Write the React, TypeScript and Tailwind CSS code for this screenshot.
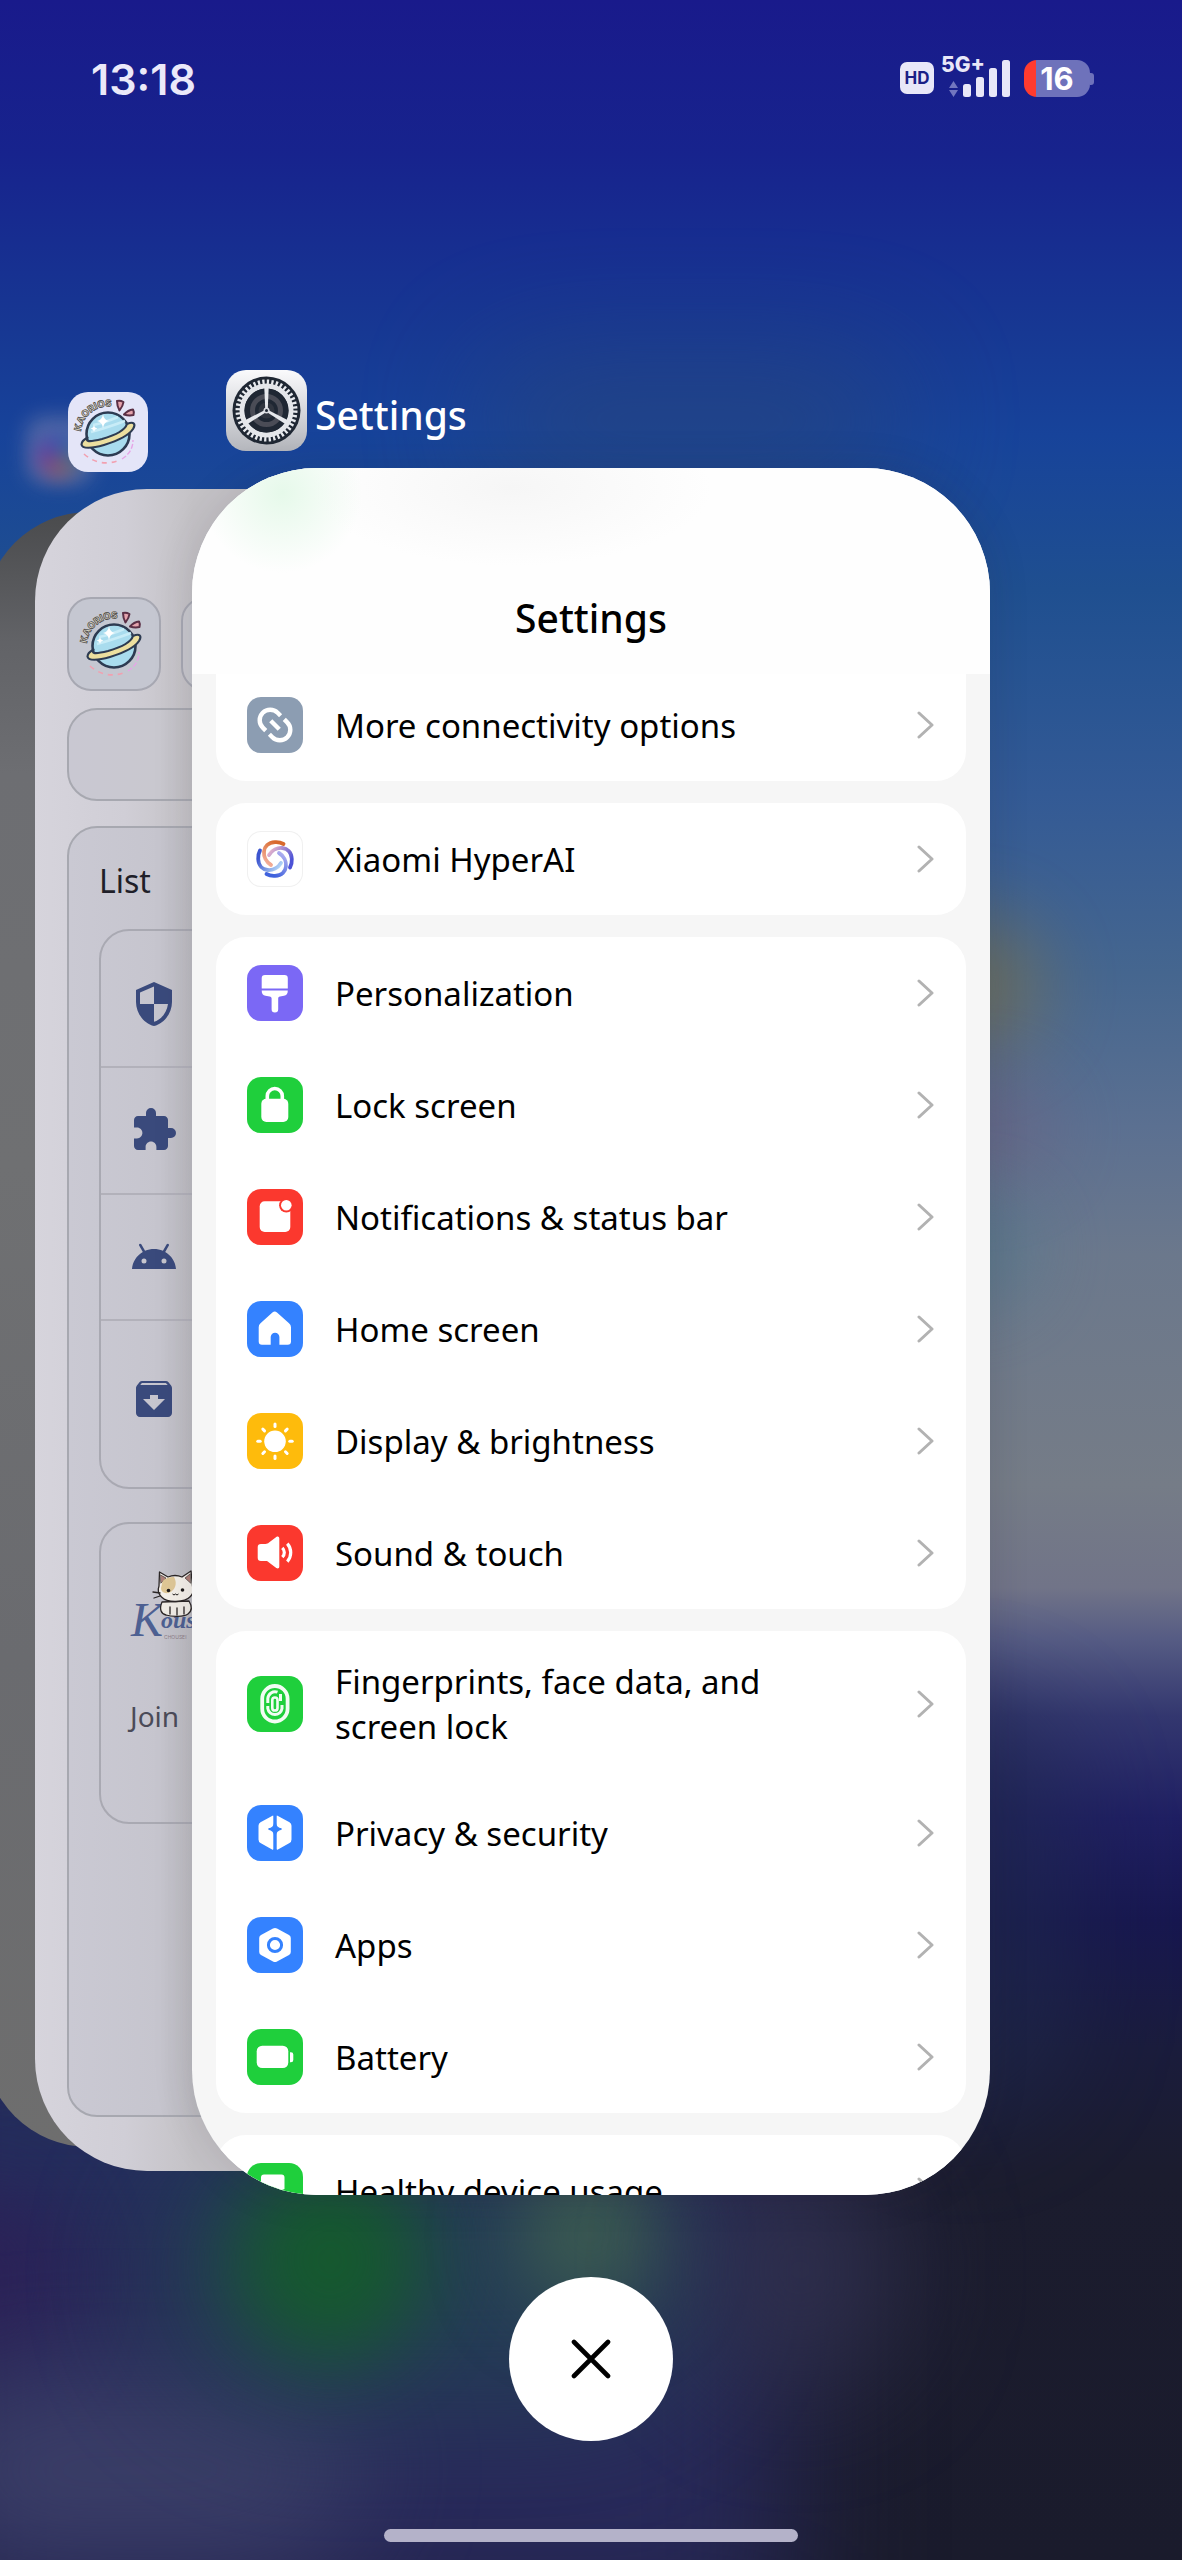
import React from 'react';
import { MdSecurity, MdExtension, MdArchive } from 'react-icons/md';

interface SettingItem {
  label: string;
  tile: string;
  icon: React.ReactNode;
}

const LinkIcon = () => (
  <g transform="translate(28 28) rotate(45)" fill="none" stroke="#fff" strokeWidth="4.4">
    <path d="M-2.6 -10.5H-6.8A10.5 10.5 0 0 0 -6.8 10.5H-2.6" />
    <path d="M2.6 -10.5H6.8A10.5 10.5 0 0 1 6.8 10.5H2.6" />
    <path d="M-6 0H6" />
  </g>
);

// Four spiral arms, each a quarter turn from the last
const HyperAiIcon = () => {
  const arm = 'M-4 6C-14 0 -14 -16 0 -16.8C3 -17 6 -16.4 8.5 -15';
  return (
    <>
      <defs>
        <linearGradient id="armOrange" x1="0" y1="1" x2="0.6" y2="0">
          <stop offset="0" stopColor="#f7b7a8" />
          <stop offset="1" stopColor="#d8692c" />
        </linearGradient>
        <linearGradient id="armPurple" x1="0" y1="1" x2="0.6" y2="0">
          <stop offset="0" stopColor="#f3bccb" />
          <stop offset="1" stopColor="#4c52d6" />
        </linearGradient>
        <linearGradient id="armBlue" x1="0" y1="1" x2="0.6" y2="0">
          <stop offset="0" stopColor="#b9b6f2" />
          <stop offset="1" stopColor="#3f62dd" />
        </linearGradient>
        <linearGradient id="armSky" x1="0" y1="1" x2="0.6" y2="0">
          <stop offset="0" stopColor="#bfe2fb" />
          <stop offset="1" stopColor="#3c55cf" />
        </linearGradient>
      </defs>
      <g transform="translate(28 28)" fill="none" strokeWidth="3.8" strokeLinecap="round">
        <path d={arm} stroke="url(#armOrange)" />
        <path d={arm} stroke="url(#armPurple)" transform="rotate(90)" />
        <path d={arm} stroke="url(#armBlue)" transform="rotate(180)" />
        <path d={arm} stroke="url(#armSky)" transform="rotate(270)" />
      </g>
    </>
  );
};

const BrushIcon = () => (
  <g fill="#fff">
    <path d="M18 10H37.500a3.300 3.300 0 0 1 3.300 3.300V23.400H14.700V13.300A3.300 3.300 0 0 1 18 10Z" />
    <path d="M14.700 25.600H40.800C40.800 29 39.500 30.400 37 30.800L33 31.400C31.600 31.600 31.200 32.400 31.200 33.500V44.300A3.300 3.300 0 0 1 24.600 44.300V33.500C24.600 32.400 24 31.600 22.600 31.400L18.500 30.800C16 30.400 14.700 29 14.700 25.600Z" />
  </g>
);

const LockIcon = () => (
  <>
    <rect x="14.300" y="21.700" width="27" height="23.300" rx="5" fill="#fff" />
    <path d="M20.300 24V19A7.500 7.500 0 0 1 35.300 19V24" fill="none" stroke="#fff" strokeWidth="3.600" />
  </>
);

const NotificationIcon = () => (
  <>
    <rect x="12.700" y="12.300" width="30.600" height="30.700" rx="5" fill="#fff" />
    <circle cx="39.300" cy="16.300" r="7.200" fill="#fb382e" />
    <circle cx="39.300" cy="16.300" r="5.300" fill="#fff" />
  </>
);

const HomeIcon = () => (
  <path
    d="M25.400 11.600a3.500 3.500 0 0 1 4.600 0L42 22.200A5 5 0 0 1 44 26.200V40.500A3.300 3.300 0 0 1 40.700 43.700H32.400V36A4.350 4.350 0 0 0 23.700 36V43.700H15A3.300 3.300 0 0 1 11.700 40.500V26.200A5 5 0 0 1 13.500 22.200Z"
    fill="#fff"
  />
);

const SunIcon = () => (
  <g transform="translate(28 28.300)">
    <circle r="10.800" fill="#fff" />
    {[0, 45, 90, 135, 180, 225, 270, 315].map((angle) => (
      <path key={angle} d="M0 -14.800V-17.200" transform={`rotate(${angle})`} stroke="#fff" strokeWidth="3" strokeLinecap="round" />
    ))}
  </g>
);

const SoundIcon = () => (
  <>
    <path d="M14 19H18.500C20 19 20.800 18.600 22 17.600L29.300 12C30.800 11 32.300 11.600 32.300 13.500V41.500C32.300 43.400 30.800 44 29.300 43L22 37.400C20.800 36.400 20 36 18.500 36H14A3.300 3.300 0 0 1 10.700 32.700V22.300A3.300 3.300 0 0 1 14 19Z" fill="#fff" />
    <g fill="none" stroke="#fff" strokeWidth="3.200">
      <path d="M35.300 22.800A6.500 6.500 0 0 1 35.300 32.200" />
      <path d="M40.300 18.600A13.500 13.500 0 0 1 40.300 36.600" />
    </g>
  </>
);

const FingerprintIcon = () => (
  <g fill="none" stroke="#fff" strokeOpacity="0.94">
    <rect x="15.200" y="10" width="25.400" height="35.500" rx="12.700" strokeWidth="3.800" />
    <path d="M20.800 27V22.500A7.200 7.200 0 0 1 30.500 16.200" strokeWidth="3" />
    <path d="M33.500 18V25M35 29V32.500A7.200 7.200 0 0 1 20.800 32.500V30" strokeWidth="3" />
    <rect x="25.300" y="21.500" width="5.200" height="13" rx="2.600" strokeWidth="2.600" />
  </g>
);

const PrivacyIcon = () => (
  <>
    <path d="M25.500 10.800L13.500 17.200A4 4 0 0 0 11.500 20.700V34.500A4 4 0 0 0 13.500 38L25.500 44.800Q26.300 45 26.300 44V10.900Q26.300 10.300 25.500 10.800Z" fill="#fff" />
    <path d="M30.500 10.800L42.500 17.200A4 4 0 0 1 44.500 20.700V34.500A4 4 0 0 1 42.500 38L30.500 44.800Q29.700 45 29.700 44V10.900Q29.700 10.300 30.500 10.800Z" fill="#fff" />
    <path d="M28 17Q28.800 23.200 34.500 24Q28.800 24.800 28 31Q27.200 24.800 21.500 24Q27.200 23.200 28 17Z" fill="#3482ff" stroke="#3482ff" strokeWidth="1.500" />
  </>
);

const AppsIcon = () => (
  <>
    <path d="M26 11.500a4 4 0 0 1 4 0L42 18A3.500 3.500 0 0 1 43.800 21V35A3.500 3.500 0 0 1 42 38L30 44.500a4 4 0 0 1 -4 0L14 38A3.500 3.500 0 0 1 12.200 35V21A3.500 3.500 0 0 1 14 18Z" fill="#fff" />
    <circle cx="28" cy="28" r="6.600" fill="none" stroke="#3482ff" strokeWidth="3" />
  </>
);

const BatteryIcon = () => (
  <g fill="#fff">
    <rect x="9.700" y="16.700" width="31.600" height="22.300" rx="5.500" />
    <path d="M43 23.200H44A2.300 2.300 0 0 1 46.300 25.500V31A2.300 2.300 0 0 1 44 33.300H43Z" />
  </g>
);

const HealthIcon = () => (
  <path d="M17 11.500H34.500A3 3 0 0 1 37.500 14.500V26A9 9 0 0 0 30 36H17A3 3 0 0 1 14 33V14.500A3 3 0 0 1 17 11.500Z" fill="#fff" />
);

const groups: SettingItem[][] = [
  [{ label: 'Xiaomi HyperAI', tile: 'bg-white ring-1 ring-inset ring-[#f0f0f0]', icon: <HyperAiIcon /> }],
  [
    { label: 'Personalization', tile: 'bg-[#7b68f5]', icon: <BrushIcon /> },
    { label: 'Lock screen', tile: 'bg-[#1fcf3c]', icon: <LockIcon /> },
    { label: 'Notifications & status bar', tile: 'bg-[#fb382e]', icon: <NotificationIcon /> },
    { label: 'Home screen', tile: 'bg-[#3482ff]', icon: <HomeIcon /> },
    { label: 'Display & brightness', tile: 'bg-[#febb0c]', icon: <SunIcon /> },
    { label: 'Sound & touch', tile: 'bg-[#fb382e]', icon: <SoundIcon /> }
  ],
  [
    { label: 'Fingerprints, face data, and screen lock', tile: 'bg-[#1fcf3c]', icon: <FingerprintIcon /> },
    { label: 'Privacy & security', tile: 'bg-[#3482ff]', icon: <PrivacyIcon /> },
    { label: 'Apps', tile: 'bg-[#3482ff]', icon: <AppsIcon /> },
    { label: 'Battery', tile: 'bg-[#1fcf3c]', icon: <BatteryIcon /> }
  ],
  [{ label: 'Healthy device usage', tile: 'bg-[#1fcf3c]', icon: <HealthIcon /> }]
];

const SettingRow: React.FC<{ item: SettingItem }> = ({ item }) => (
  <a href="#" className="flex items-center gap-8 py-7 pr-8 pl-[31px] text-black">
    <span className={`size-14 shrink-0 overflow-hidden rounded-[14px] ${item.tile}`}>
      <svg viewBox="0 0 56 56" className="size-14">{item.icon}</svg>
    </span>
    <span className="max-w-[480px] text-[33px] leading-[45px]">{item.label}</span>
    <svg viewBox="0 0 18 28" className="ml-auto h-7 w-[18px] shrink-0" fill="none" stroke="#b2b2b2" strokeWidth="3" strokeLinecap="round" strokeLinejoin="round">
      <path d="M3 2L16 14L3 26" />
    </svg>
  </a>
);

const KaoriosLogo: React.FC<{ id: string }> = ({ id }) => (
  <svg viewBox="0 0 80 80" className="size-20">
    <defs>
      <path id={id} d="M13 39.500A27.500 27.500 0 0 1 52 17" />
    </defs>
    <text fontFamily="Inter, sans-serif" fontSize="9.5" fontWeight="800" fill="#d8d3c4" stroke="#4a4743" strokeWidth="0.700">
      <textPath href={`#${id}`}>KAORIOS</textPath>
    </text>
    <circle cx="40" cy="42" r="21.500" fill="#a9dcee" stroke="#2d3b52" strokeWidth="2.600" />
    <path d="M23 40Q38 36 57 29M25 33Q36 31 50 25" stroke="#c8ecf7" strokeWidth="2.500" fill="none" />
    <path d="M35 22Q35.800 28 41 29Q35.800 30 35 36Q34.200 30 29 29Q34.200 28 35 22Z" fill="#fff" />
    <path d="M26 33Q26.500 36 29.500 36.500Q26.500 37 26 40Q25.500 37 22.500 36.500Q25.500 36 26 33Z" fill="#fff" />
    <path d="M59 32C66 29 68 32 65 37C61 43 49 49 36 53C24 56.500 14 57 13.500 52.500C13.500 49.500 16 47.500 19.500 45.500C17.500 49.500 20 50.500 34 47C48 43 57 38 59 32Z" fill="#ecdf9f" stroke="#2d3b52" strokeWidth="2.200" strokeLinejoin="round" />
    <path d="M49 9Q52 8 55.500 10Q55 14 51.500 18.500Q49 14 49 9Z" fill="#e5a3ad" stroke="#5b2f45" strokeWidth="2" strokeLinejoin="round" />
    <path d="M65 17.500Q66.500 20 65.500 23Q61 24 56 22.500Q60 18 65 17.500Z" fill="#e5a3ad" stroke="#5b2f45" strokeWidth="2" strokeLinejoin="round" />
    <path d="M16 62Q32 76 52 68" fill="none" stroke="#f2a0b0" strokeWidth="1.600" strokeDasharray="5 5" />
    <path d="M54 67Q65 60 65 48" fill="none" stroke="#e6a5e6" strokeWidth="1.400" strokeDasharray="5 2" />
  </svg>
);

const GearLogo = () => (
  <svg viewBox="0 0 81 81" className="size-[81px]">
    <defs>
      <linearGradient id="gearBg" x1="0" y1="0" x2="0" y2="1">
        <stop offset="0" stopColor="#fafafc" />
        <stop offset="1" stopColor="#b4b6bc" />
      </linearGradient>
    </defs>
    <rect width="81" height="81" rx="20" fill="url(#gearBg)" />
    <g transform="translate(40.500 40.500)" fill="none">
      <circle r="34" fill="#1f2733" />
      <circle r="28.500" stroke="#e9ebef" strokeWidth="5" strokeDasharray="2.240 2.240" />
      <circle r="24.500" stroke="#e4e6ea" strokeWidth="5" />
      <circle r="22" fill="#1f2733" />
      <circle r="14" stroke="#4a4c56" strokeWidth="5" />
      <circle r="8" fill="#30353f" />
      {[0, 120, 240].map((angle) => (
        <path key={angle} d="M-1.200 0L-2.200 -23H2.200L1.200 0Z" transform={`rotate(${angle})`} fill="#e6e8ec" />
      ))}
      <circle r="3" fill="#d9dbe0" />
      <circle r="1.500" fill="#1f2733" />
    </g>
  </svg>
);

const AndroidHead = () => (
  <svg viewBox="0 0 24 24" className="size-12" fill="currentColor">
    <path d="M17.600 9.480l1.840-3.180c.16-.31.04-.69-.26-.85-.29-.15-.65-.06-.83.22l-1.880 3.240c-2.860-1.210-6.080-1.210-8.940 0L5.650 5.670c-.19-.29-.58-.38-.87-.2-.28.18-.37.54-.22.83L6.400 9.480C3.300 11.250 1.280 14.440 1 18h22c-.28-3.560-2.300-6.750-5.400-8.520zM7 15.250a1.250 1.250 0 1 1 0-2.500 1.250 1.250 0 0 1 0 2.500zm10 0a1.250 1.250 0 1 1 0-2.500 1.250 1.250 0 0 1 0 2.500z" />
  </svg>
);

const CatLogo = () => (
  <svg viewBox="0 0 90 72" className="h-[72px] w-[90px]">
    <text y="68" fontFamily="Liberation Serif, serif" fontStyle="italic" fontWeight="bold" fill="#4d6092">
      <tspan x="1" fontSize="48" fontWeight="normal">K</tspan>
      <tspan x="31" y="60" fontSize="24">ousei</tspan>
    </text>
    <g stroke="#2b2626" strokeWidth="1.300" strokeLinejoin="round" strokeLinecap="round">
      <path d="M32 34C29 41 31 46 36 47C42 49 54 49 58 46C62 43 62 38 59 33Z" fill="#f1ede6" />
      <path d="M40 39V46M47 40V47M54 39V46" fill="none" />
      <path d="M29 18L29.500 4L38 9Q45 6 52 9L61 3L62.500 18C65 26 60 33 46 33.500C33 34 26 26 29 18Z" fill="#f5f1ea" />
      <path d="M30.500 7L36 10L31 15Z" fill="#b08079" strokeWidth="0.600" />
      <path d="M60 6L55 10L60.500 15Z" fill="#b08079" strokeWidth="0.600" />
      <path d="M23 24L30 25M24 30L30 28" fill="none" />
    </g>
    <path d="M32 16C32 11 38 9 44 9C47 14 46 20 42 23C37 27 31 25 31 20Z" fill="#e0c896" />
    <g fill="#1d1a1a">
      <circle cx="38.500" cy="22.500" r="1.800" />
      <circle cx="52.500" cy="22" r="1.800" />
    </g>
    <path d="M42.500 26Q44 28 45.500 26Q47 28 48.500 26" fill="none" stroke="#1d1a1a" strokeWidth="1" />
    <text x="34" y="71" fontFamily="Inter, sans-serif" fontSize="5" fill="#8d7f88">CHOUSEI</text>
  </svg>
);

const Wallpaper = () => (
  <div className="absolute inset-0 overflow-hidden bg-[linear-gradient(180deg,#191a8b_0%,#17238d_6%,#173893_13%,#17439a_17%,#1f4f90_23%,#335a95_31%,#45668f_38%,#5b7091_44%,#6b788c_49%,#757c87_58%,#717488_62%,#565c84_64%,#33376f_67%,#1f1f62_71%,#17174f_75%,#1a1c3c_80%,#1b1c2e_85%,#1a1b2c_100%)]">
    <div className="absolute top-[360px] left-[480px] h-[120px] w-[420px] rounded-full bg-[#2b4576] opacity-60 blur-[60px]" />
    <div className="absolute top-[920px] left-[900px] h-[130px] w-[140px] rounded-full bg-[#7c7148] opacity-70 blur-[40px]" />
    <div className="absolute top-[1080px] left-[920px] h-[100px] w-[130px] rounded-full bg-[#6e5f7d] opacity-60 blur-[40px]" />
    <div className="absolute top-[1200px] left-[910px] h-[100px] w-[120px] rounded-full bg-[#48768a] opacity-60 blur-[40px]" />
    <div className="absolute top-[1700px] left-[850px] h-[420px] w-[220px] rounded-full bg-[#202a4c] opacity-60 blur-[50px]" />
    <div className="absolute -bottom-20 -left-24 h-[620px] w-[880px] bg-[#28295a] blur-[70px]" />
    <div className="absolute top-[2060px] -left-20 h-[160px] w-[420px] bg-[#242d5c] blur-[40px]" />
    <div className="absolute top-[2180px] -left-24 h-[200px] w-[160px] rounded-full bg-[#2c2158] opacity-80 blur-[40px]" />
    <div className="absolute top-[2380px] -left-20 h-[180px] w-[440px] rounded-full bg-[#40446b] opacity-80 blur-[60px]" />
    <div className="absolute top-[2140px] left-[150px] h-[270px] w-[560px] rounded-full bg-[#243f55] opacity-90 blur-[60px]" />
    <div className="absolute top-[2160px] left-[235px] h-[200px] w-[190px] rounded-full bg-[#145c2b] opacity-90 blur-[40px]" />
    <div className="absolute top-[2160px] left-[515px] h-[150px] w-[150px] rounded-full bg-[#3b5a51] blur-[40px]" />
    <div className="absolute top-[2150px] left-[700px] h-[240px] w-[200px] rounded-full bg-[#323250] opacity-80 blur-[60px]" />
  </div>
);

const StatusBar = () => (
  <header className="relative flex h-32 shrink-0 items-start justify-between pt-14 pr-[88px] pl-[91px]">
    <time className="font-[Inter] text-[43px] leading-[46px] font-semibold text-[#ebe9f9]">13:18</time>
    <div className="flex items-end font-[Inter] font-bold">
      <span className="mr-[7px] mb-[3px] flex h-8 w-[34px] items-center justify-center rounded-[7px] bg-[#e8e7f8] text-[17px] leading-none text-[#1a2086]">HD</span>
      <span className="relative h-[41px] w-[69px] text-[#e8e7f8]">
        <span className="absolute top-[-3px] left-0 text-[21px] leading-[24px] font-extrabold">5G+</span>
        <svg viewBox="0 0 69 41" className="h-[41px] w-[69px]" fill="currentColor">
          <path d="M8 32L12.500 25L17 32ZM8 34L12.500 41L17 34Z" fill="#7276bf" />
          <rect x="22" y="28" width="8" height="13" rx="2.500" />
          <rect x="35" y="21" width="8" height="20" rx="2.500" />
          <rect x="48" y="12" width="8" height="29" rx="2.500" />
          <rect x="61" y="4" width="8" height="37" rx="2.500" />
        </svg>
      </span>
      <span className="ml-[14px] flex items-center">
        <span className="flex h-[37px] w-[66px] items-center justify-center rounded-[13px] bg-[linear-gradient(90deg,#ff3b2f_12px,#6e72bb_12px)] text-[31px] leading-none text-white">16</span>
        <span className="h-3 w-1 rounded-r-[3px] bg-[#6e72bb]" />
      </span>
    </div>
  </header>
);

const KaoriosCard = () => (
  <>
    <div className="absolute top-[361px] bottom-6 left-[35px] flex w-[700px] flex-col overflow-hidden rounded-[112px] bg-[linear-gradient(90deg,#d6d4dc_0px,#d0ced6_90px,#c4c2c6_158px)] px-8 pt-[108px] pb-[54px] text-[#1f1f29]">
      <div className="flex gap-5">
        <div className="flex size-[94px] shrink-0 items-center justify-center rounded-[24px] border-2 border-[#a7a8b2] bg-[#c5c7d1]">
          <KaoriosLogo id="kaoriosArcSmall" />
        </div>
        <div className="h-[94px] grow rounded-[24px] border-2 border-[#a7a8b2] bg-[#c8c8ce]" />
      </div>
      <div className="mt-[17px] h-[93px] shrink-0 rounded-[30px] border-2 border-[#a7a8b0] bg-[linear-gradient(90deg,#c9c8d2_0px,#c9c8cf_90px,#bfbdc1_126px)]" />
      <div className="mt-[25px] grow rounded-[30px] border-2 border-[#a7a8b0] bg-[linear-gradient(90deg,#cac9d3_0px,#c6c5ce_90px,#bcbbc0_126px)] px-[30px] pt-[30px]">
        <h2 className="text-[32px] leading-[45px]">List</h2>
        <ul className="mt-[26px] rounded-[30px] border-2 border-[#a9a9b2] text-[#3a4a7c]">
          <li className="border-b-2 border-[#b2b1ba] pt-[49px] pb-[38px] pl-[29px]"><MdSecurity className="size-12" /></li>
          <li className="border-b-2 border-[#b2b1ba] pt-[38px] pb-[39px] pl-[29px]"><MdExtension className="size-12" /></li>
          <li className="border-b-2 border-[#b2b1ba] py-[38px] pl-[29px]"><AndroidHead /></li>
          <li className="pt-[54px] pb-16 pl-[29px]"><MdArchive className="size-12" /></li>
        </ul>
        <div className="mt-[33px] h-[302px] rounded-[30px] border-2 border-[#a9a9b2] pt-11 pl-[29px]">
          <CatLogo />
          <p className="mt-14 text-[28px] leading-[40px] text-[#4b4b58]">Join</p>
        </div>
      </div>
    </div>
    <div className="absolute top-[264px] left-[68px] overflow-hidden rounded-[20px] bg-[#e4e5f8]">
      <KaoriosLogo id="kaoriosArcLarge" />
    </div>
  </>
);

const SettingsCard = () => (
  <section className="flex min-h-0 grow flex-col overflow-hidden rounded-[125px] bg-[#f6f6f6] shadow-[0_0_40px_rgba(40,35,50,0.14)]">
    <div className="relative z-10 flex h-[206px] shrink-0 items-end justify-center bg-[radial-gradient(circle_at_90px_25px,#e6f9ea_0px,rgba(255,255,255,0)_80px),radial-gradient(ellipse_at_320px_20px,#f6f6f6_0px,rgba(255,255,255,0)_200px),linear-gradient(#fefefe,#fefefe)] pb-7">
      <h1 className="text-[39px] leading-[56px] font-medium text-black">Settings</h1>
    </div>
    <nav className="-mt-[5px] flex flex-col gap-[22px] px-6">
      <div className="rounded-b-[30px] bg-white">
        <SettingRow item={{ label: 'More connectivity options', tile: 'bg-[#8c9db2]', icon: <LinkIcon /> }} />
      </div>
      {groups.map((group) => (
        <div key={group[0].label} className="rounded-[30px] bg-white">
          {group.map((item) => (
            <SettingRow key={item.label} item={item} />
          ))}
        </div>
      ))}
    </nav>
  </section>
);

export default function App() {
  return (
    <div className="relative flex h-screen flex-col overflow-hidden font-['Noto_Sans',sans-serif]">
      <Wallpaper />
      <StatusBar />

      <main className="relative flex min-h-0 grow flex-col px-48 pt-[242px]">
        {/* Cards further back in the recents stack */}
        <div className="absolute top-[288px] left-[26px] size-[68px] rounded-[18px] bg-[#5c6fa8] opacity-80 blur-[10px]" />
        <div className="absolute top-[305px] left-[36px] size-[46px] rounded-full bg-[conic-gradient(#3a55b0,#3f6f8a,#8a5a6a,#6a3f9a,#3a55b0)] blur-[9px]" />
        <div className="absolute top-[384px] bottom-12 left-[-16px] w-[600px] rounded-[105px] bg-[linear-gradient(180deg,#4a4b4d_0%,#626367_8%,#6d6e72_16%,#6f7072_40%,#6a6b6f_70%,#6e6e6e_100%)]" />
        <KaoriosCard />

        <div className="relative mb-[17px] ml-[34px] flex shrink-0 items-end gap-2">
          <GearLogo />
          <span className="text-[39px] leading-[72px] font-medium text-white">Settings</span>
        </div>
        <div className="relative flex min-h-0 grow flex-col">
          <SettingsCard />
        </div>
      </main>

      <footer className="relative flex shrink-0 flex-col items-center pt-[82px] pb-[18px]">
        <button type="button" aria-label="Close all" className="flex size-[164px] items-center justify-center rounded-full bg-white">
          <svg viewBox="0 0 40 40" className="size-10" stroke="#000" strokeWidth="4.600" strokeLinecap="round">
            <path d="M3 3L37 37M37 3L3 37" />
          </svg>
        </button>
        <div className="mt-[88px] h-[13px] w-[414px] rounded-full bg-[#b4b2c9]" />
      </footer>
    </div>
  );
}
